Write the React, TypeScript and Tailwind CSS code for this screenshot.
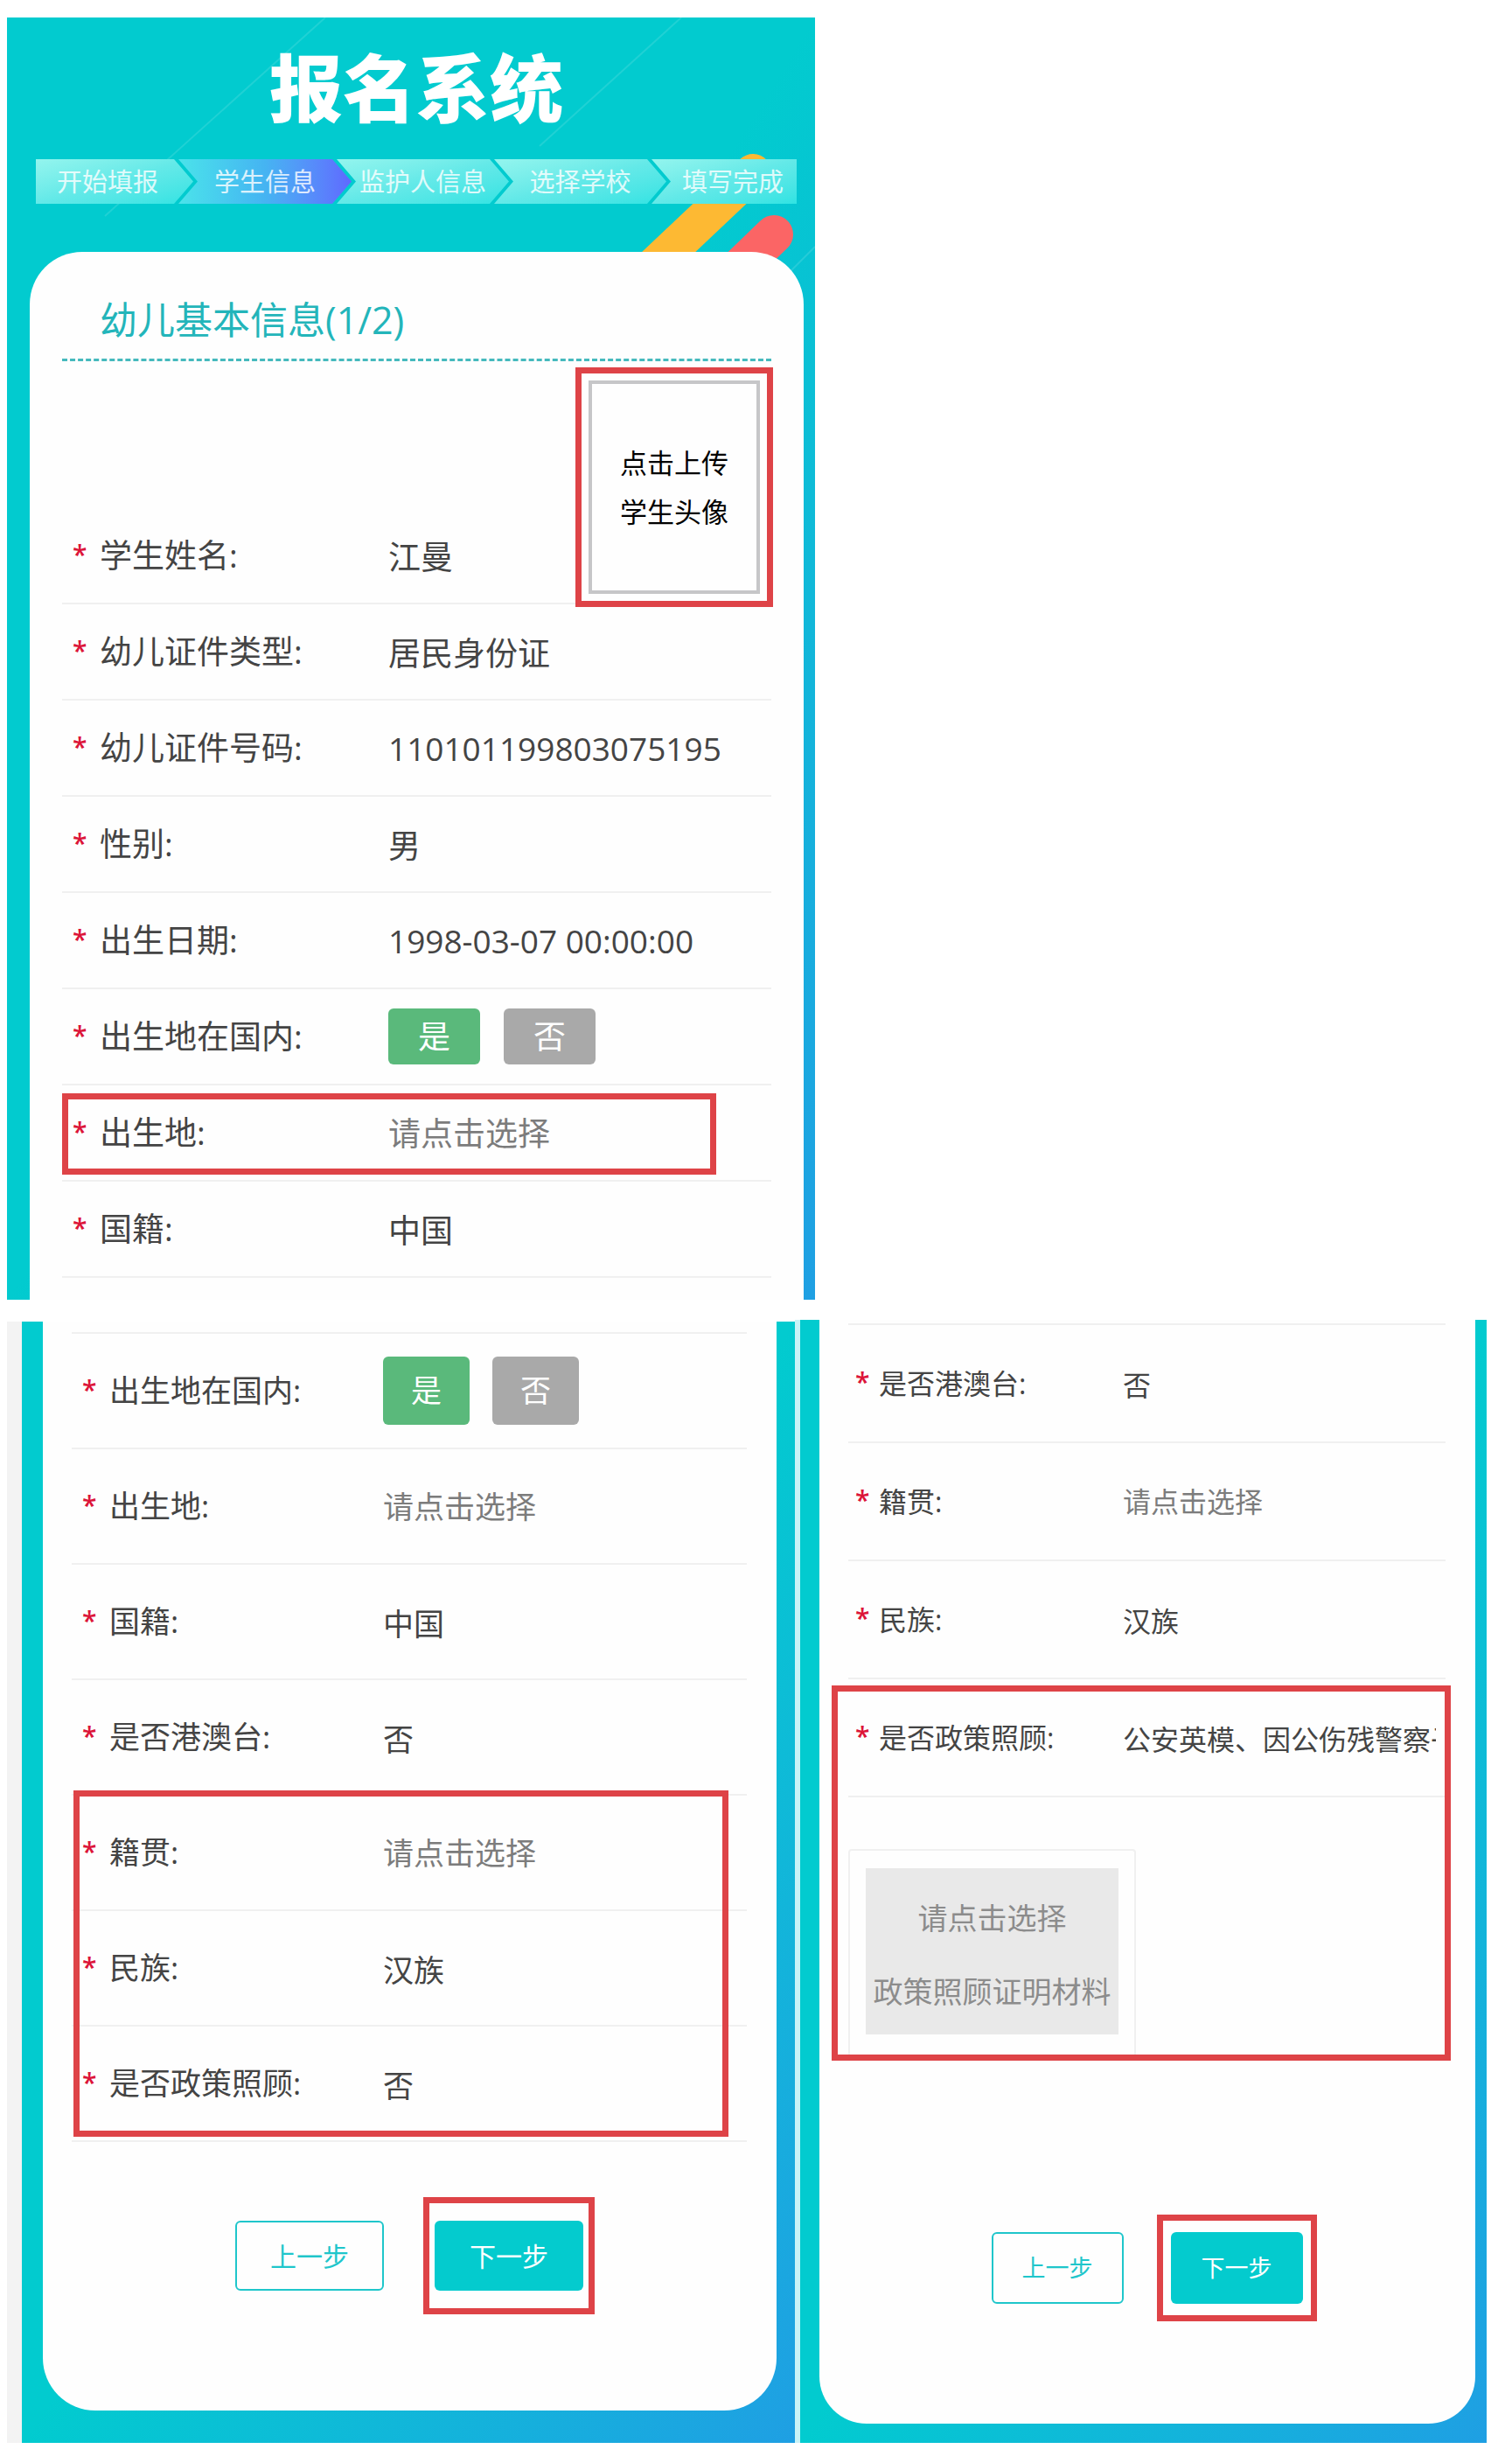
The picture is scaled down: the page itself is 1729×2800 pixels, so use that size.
import type { ReactNode } from "react";
import clsx from "clsx";

type Size = "lg" | "md" | "sm";

interface Field {
  name: string;
  label: string;
  value?: string;
  toggle?: boolean;
}

const sizes = {
  lg: {
    row: "h-[110px] text-[37px] pl-3",
    star: "w-[31px]",
    label: "w-[330px]",
    toggle: "h-16 w-[105px]",
    toggleGap: "gap-[27px]",
    action: "",
    actionGap: "",
  },
  md: {
    row: "h-[132px] text-[35px] pl-3",
    star: "w-[31px]",
    label: "w-[313px]",
    toggle: "h-[78px] w-[99px]",
    toggleGap: "gap-[26px]",
    action: "h-20 w-[170px] text-[30px]",
    actionGap: "gap-[58px]",
  },
  sm: {
    row: "h-[135px] text-[32px] pl-2 pr-[11px]",
    star: "w-[27px]",
    label: "w-[279px]",
    toggle: "",
    toggleGap: "",
    action: "h-[82px] w-[151px] text-[27px]",
    actionGap: "gap-[54px]",
  },
};

const studentFields: Field[] = [
  { name: "name", label: "学生姓名:", value: "江曼" },
  { name: "idType", label: "幼儿证件类型:", value: "居民身份证" },
  { name: "idNumber", label: "幼儿证件号码:", value: "110101199803075195" },
  { name: "gender", label: "性别:", value: "男" },
  { name: "birthday", label: "出生日期:", value: "1998-03-07 00:00:00" },
  { name: "bornInChina", label: "出生地在国内:", toggle: true },
];

const steps = [
  { title: "开始填报", className: "-mr-[17px] pr-4 [clip-path:polygon(0_0,calc(100%-22px)_0,100%_50%,calc(100%-22px)_100%,0_100%)]" },
  { title: "学生信息", className: "-mr-[17px]", active: true },
  { title: "监护人信息", className: "-mr-[17px]" },
  { title: "选择学校", className: "-mr-[17px]" },
  { title: "填写完成", className: "pl-5 [clip-path:polygon(0_0,100%_0,100%_100%,0_100%,22px_50%)]" },
];

function Highlight({ className }: { className: string }) {
  return <div className={clsx("pointer-events-none absolute border-7 border-[#de4347]", className)} />;
}

function Steps() {
  return (
    <ol className="relative ml-[33px] mr-[21px] grid h-[51px] grid-cols-[163fr_181fr_180fr_180fr_166fr]">
      {steps.map((step, i) => (
        <li
          key={step.title}
          className={clsx(
            "flex items-center justify-center whitespace-nowrap text-[29px] text-white/80",
            i > 0 && i < 4 && "[clip-path:polygon(0_0,calc(100%-22px)_0,100%_50%,calc(100%-22px)_100%,0_100%,22px_50%)]",
            step.active
              ? "bg-linear-to-r from-[#4be3ea] via-[#45b4f2] to-[#5f68ff]"
              : "bg-linear-to-br from-[#93f5ee] via-[#63e9e8] to-[#2fe3e3]",
            step.className
          )}
        >
          {step.title}
        </li>
      ))}
    </ol>
  );
}

function HeaderArt() {
  return (
    <svg viewBox="0 0 924 300" className="absolute left-0 top-0 w-full" aria-hidden="true">
      <g stroke="#fff" strokeOpacity="0.12" strokeWidth="2">
        <path d="M364 0L112 227" />
        <path d="M771 0L609 147" />
        <path d="M924 262L890 296" />
      </g>
      <path d="M853 177L725 298" stroke="#fdb933" strokeWidth="42" strokeLinecap="round" />
      <path d="M877 248L820 303" stroke="#fb6565" strokeWidth="44" strokeLinecap="round" />
    </svg>
  );
}

interface FieldRowProps {
  field: Field;
  size: Size;
  prefix: string;
}

function FieldRow({ field, size, prefix }: FieldRowProps) {
  const s = sizes[size];
  const id = `${prefix}-${field.name}`;

  return (
    <div className={clsx("flex items-center border-b-2 border-[#f0f0f0] text-[#444]", s.row)}>
      <span className={clsx("shrink-0 pb-1 text-[30px] font-semibold text-[#dc1438]", s.star)}>*</span>
      {field.toggle ? (
        <>
          <span id={id} className={clsx("shrink-0", s.label)}>
            {field.label}
          </span>
          <div role="group" aria-labelledby={id} className={clsx("flex text-white", s.toggleGap)}>
            <button type="button" aria-pressed="true" className={clsx("rounded-md bg-[#5ab97b]", s.toggle)}>
              是
            </button>
            <button type="button" aria-pressed="false" className={clsx("rounded-md bg-[#a9a9a9]", s.toggle)}>
              否
            </button>
          </div>
        </>
      ) : (
        <>
          <label htmlFor={id} className={clsx("shrink-0", s.label)}>
            {field.label}
          </label>
          <input
            id={id}
            type="text"
            readOnly
            defaultValue={field.value}
            placeholder="请点击选择"
            className="h-full w-full min-w-0 bg-transparent outline-none placeholder:text-[#7c7c7c]"
          />
        </>
      )}
    </div>
  );
}

function Actions({ size, frame }: { size: Size; frame: string }) {
  const s = sizes[size];
  return (
    <div className={clsx("flex justify-center", s.actionGap)}>
      <button type="button" className={clsx("rounded-md border-2 border-[#1fc6cb] text-[#1fc6cb]", s.action)}>
        上一步
      </button>
      <div className="relative">
        <button type="button" className={clsx("rounded-md bg-[#04cbce] text-white", s.action)}>
          下一步
        </button>
        <Highlight className={frame} />
      </div>
    </div>
  );
}

function Phone({ className, children }: { className?: string; children: ReactNode }) {
  return (
    <section className={clsx("relative overflow-hidden bg-linear-to-br from-[#02cbcf] from-50% to-[#1f9fe3]", className)}>
      {children}
    </section>
  );
}

export default function App() {
  return (
    <main className="bg-white pb-[7px] pt-5 leading-normal font-['Open_Sans','Noto_Sans_CJK_SC',sans-serif]">
      <div className="grid grid-cols-[924fr_797fr] pl-2">
        <Phone>
          <HeaderArt />
          <h1 className="relative flex h-[162px] items-center justify-center pl-3 text-[84px] leading-none font-black text-white">
            报名系统
          </h1>
          <Steps />
          <div className="relative ml-[26px] mr-[13px] mt-[55px] rounded-t-[60px] bg-[#fefefe] px-[37px] pb-[25px]">
            <h2 className="flex h-[125px] items-center border-b-3 border-dashed border-[#45b9bd] pl-[43px] pt-[35px] text-[43px] text-[#23b5ba]">
              幼儿基本信息(1/2)
            </h2>
            <form className="relative pt-[168px]">
              {studentFields.map((field) => (
                <FieldRow key={field.name} field={field} size="lg" prefix="student" />
              ))}
              <div className="relative">
                <FieldRow field={{ name: "birthplace", label: "出生地:" }} size="lg" prefix="student" />
                <Highlight className="bottom-2 left-0 right-[63px] top-[9px]" />
              </div>
              <FieldRow field={{ name: "nationality", label: "国籍:", value: "中国" }} size="lg" prefix="student" />
              <div className="absolute -right-0.5 top-[7px] h-[274px] w-[226px] border-7 border-[#de4347] bg-[#fefefe] p-2">
                <button type="button" className="h-full w-full border-4 border-[#c6c6c8] text-[31px] leading-[56px] text-black">
                  点击上传
                  <br />
                  学生头像
                </button>
              </div>
            </form>
          </div>
        </Phone>
      </div>

      <div className="mt-[23px] grid grid-cols-[901fr_6px_785fr_29px] pl-2">
        <div className="mt-0.5 flex border-l-17 border-[#f3f3f3]">
          <Phone className="flex-1 pb-9">
            <div className="ml-6 mr-[21px] rounded-b-[60px] bg-[#fefefe] pb-[137px] pl-[33px] pr-[34px]">
              <div className="h-3.5 border-b-2 border-[#f0f0f0]" />
              <form>
                <FieldRow field={{ name: "bornInChina", label: "出生地在国内:", toggle: true }} size="md" prefix="origin" />
                <FieldRow field={{ name: "birthplace", label: "出生地:" }} size="md" prefix="origin" />
                <FieldRow field={{ name: "nationality", label: "国籍:", value: "中国" }} size="md" prefix="origin" />
                <FieldRow field={{ name: "overseas", label: "是否港澳台:", value: "否" }} size="md" prefix="origin" />
                <div className="relative mb-[90px]">
                  <FieldRow field={{ name: "hometown", label: "籍贯:" }} size="md" prefix="origin" />
                  <FieldRow field={{ name: "ethnicity", label: "民族:", value: "汉族" }} size="md" prefix="origin" />
                  <FieldRow field={{ name: "policy", label: "是否政策照顾:", value: "否" }} size="md" prefix="origin" />
                  <Highlight className="-top-1.5 bottom-1.5 left-0.5 right-[21px]" />
                </div>
                <Actions size="md" frame="-inset-x-[13px] -inset-y-[27px]" />
              </form>
            </div>
          </Phone>
        </div>
        <div className="bg-[#c9f3f7]" />
        <Phone className="pb-[22px]">
          <div className="ml-[22px] mr-[13px] rounded-b-[54px] bg-[#fefefe] pb-[137px] pl-[33px] pr-[34px]">
            <div className="h-1.5 border-b-2 border-[#f0f0f0]" />
            <form>
              <FieldRow field={{ name: "overseas", label: "是否港澳台:", value: "否" }} size="sm" prefix="policy" />
              <FieldRow field={{ name: "hometown", label: "籍贯:" }} size="sm" prefix="policy" />
              <FieldRow field={{ name: "ethnicity", label: "民族:", value: "汉族" }} size="sm" prefix="policy" />
              <div className="relative mb-[196px] pb-[7px]">
                <FieldRow
                  field={{ name: "policy", label: "是否政策照顾:", value: "公安英模、因公伤残警察子女" }}
                  size="sm"
                  prefix="policy"
                />
                <div className="mt-[59px] w-[329px] rounded-t-sm border-2 border-b-0 border-[#f0f0f0] px-[18px] pb-[23px] pt-5">
                  <button type="button" className="h-[190px] w-full whitespace-nowrap bg-[#e9e9e9] pt-2 text-[34px] leading-[84px] text-[#8c8c8c]">
                    请点击选择
                    <br />
                    政策照顾证明材料
                  </button>
                </div>
                <Highlight className="-left-[19px] -right-1.5 bottom-0 top-[7px]" />
              </div>
              <Actions size="sm" frame="-inset-x-4 -inset-y-5" />
            </form>
          </div>
        </Phone>
      </div>
    </main>
  );
}
